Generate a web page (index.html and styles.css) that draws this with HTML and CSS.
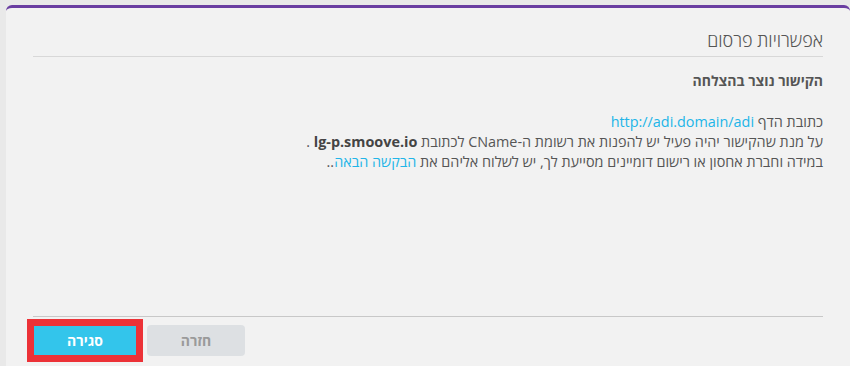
FILE: index.html
```html
<!DOCTYPE html>
<html lang="he" dir="rtl">
<head>
    <meta charset="UTF-8">
    <title>אפשרויות פרסום</title>
    <link rel="stylesheet" href="styles.css">
</head>
<body>
    <div class="card">
        <h2 class="title">אפשרויות פרסום</h2>
        <div class="content">
            <h4 class="success">הקישור נוצר בהצלחה</h4>
            <p class="info">
                כתובת הדף <a href="#">http://adi.domain/adi</a><br>
                על מנת שהקישור יהיה פעיל יש להפנות את רשומת ה-CName לכתובת <b>lg-p.smoove.io</b> .<br>
                במידה וחברת אחסון או רישום דומיינים מסייעת לך, יש לשלוח אליהם את <a href="#">הבקשה הבאה</a>..
            </p>
        </div>
        <div class="footer">
            <button class="btn btn-close">סגירה</button>
            <button class="btn btn-back">חזרה</button>
        </div>
    </div>
</body>
</html>
```

FILE: styles.css
```css
html, body {
    height: 100%;
}
body {
    margin: 0;
    padding: 5px 0 0 6px;
    box-sizing: border-box;
    background-color: #e9e9e9;
    font-family: 'Open Sans', 'DejaVu Sans', sans-serif;
    color: #555;
    overflow: hidden;
}
.card {
    background-color: #f2f2f2;
    border-top: 3px solid #6a3ea1;
    border-radius: 6px 6px 0 0;
    padding: 0 27px;
    height: 400px;
    width: 790px;
    display: flex;
    flex-direction: column;
}
.title {
    font-size: 18px;
    font-weight: 300;
    margin: 0;
    padding: 20px 0 4px;
    line-height: 24px;
    border-bottom: 1px solid #d8d8d8;
}
.content {
    height: 259px;
    border-bottom: 1px solid #c8c8c8;
}
.success {
    font-size: 14px;
    font-weight: bold;
    margin: 12px 0 0;
    line-height: 24px;
}
.info {
    font-size: 14.4px;
    line-height: 20px;
    margin: 19px 0 0;
}
.info a {
    color: #21b5e8;
    text-decoration: none;
}
.info b {
    color: #444;
}
.footer {
    display: flex;
    flex-direction: row-reverse;
    justify-content: flex-start;
    gap: 10px;
    padding-top: 8px;
}
.btn {
    font-family: inherit;
    font-size: 14px;
    font-weight: bold;
    border: none;
    border-radius: 4px;
    height: 31px;
    cursor: pointer;
}
.btn-close {
    width: 104px;
    background-color: #33c5eb;
    color: #fff;
    border-radius: 0;
    box-shadow: 0 2px 0 #c8303a;
    outline: 7px solid #ec3237;
    outline-offset: -1px;
}
.btn-back {
    width: 98px;
    background-color: #dde0e3;
    color: #9a9a9a;
}
```
